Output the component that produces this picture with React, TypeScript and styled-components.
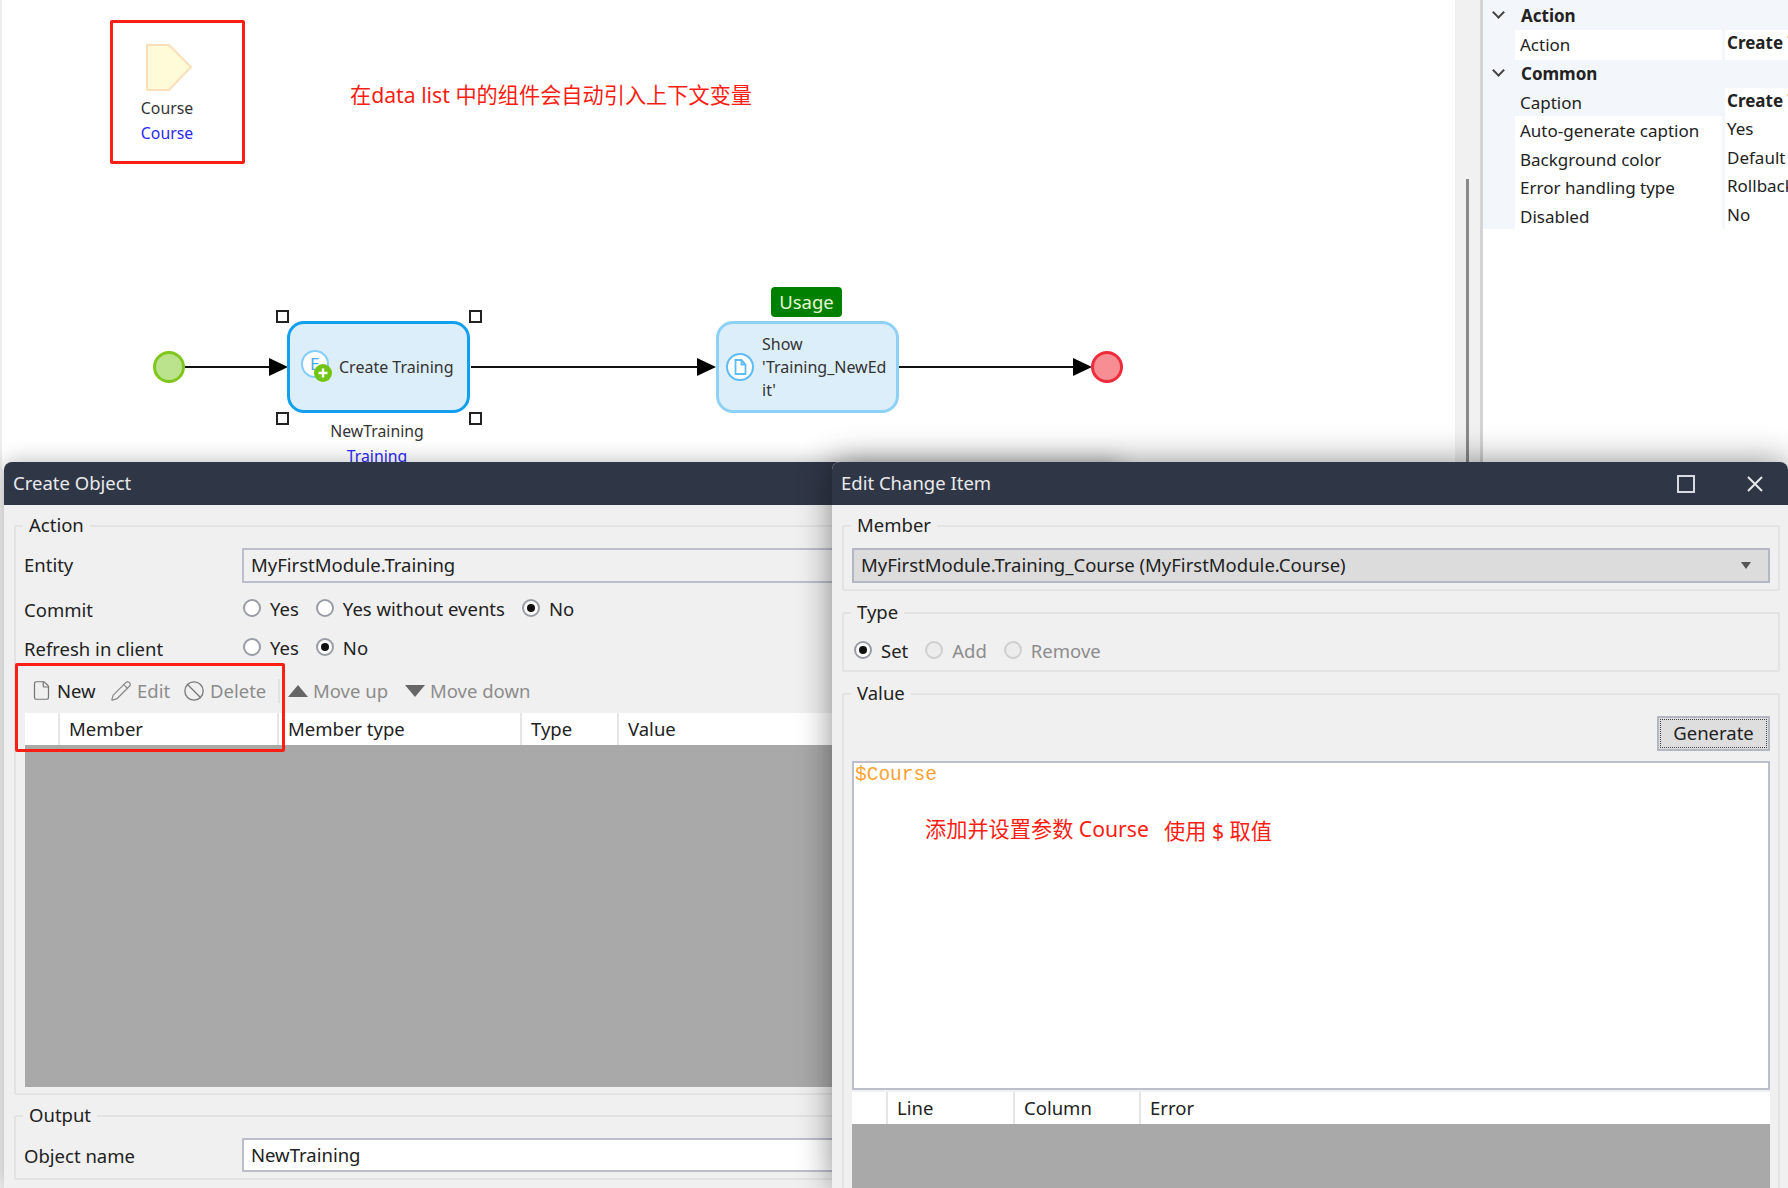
import styled, { createGlobalStyle } from "styled-components";
import { Ban, File, Pencil } from "lucide-react";

const GlobalStyle = createGlobalStyle`
  html, body {
    margin: 0;
    padding: 0;
    background: #fff;
  }
  body {
    font-family: "Noto Sans", "Noto Sans CJK SC", sans-serif;
    color: #222;
  }
`;

function CreateIcon() {
  return (
    <svg width="34" height="34" viewBox="0 0 34 34">
      <circle cx="15" cy="14" r="13" fill="#fff" stroke="#86cdf6" strokeWidth="2" />
      <text x="10" y="20" fontSize="17" fill="#4aa8e8" fontFamily="Noto Sans">E</text>
      <circle cx="23" cy="23" r="9" fill="#72c412" />
      <path d="M23 18.5v9M18.5 23h9" stroke="#fff" strokeWidth="2.4" />
    </svg>
  );
}

function PageIcon() {
  return (
    <svg width="30" height="30" viewBox="0 0 30 30">
      <circle cx="15" cy="15" r="13" fill="#fff" stroke="#5ebcf5" strokeWidth="2" />
      <path d="M10.5 8h6l4 4.5V22h-10z M16.5 8v4.5h4" fill="none" stroke="#5ebcf5" strokeWidth="1.8" />
    </svg>
  );
}

function Radio({ checked, disabled }: { checked?: boolean; disabled?: boolean }) {
  return <RadioMark $checked={checked} $disabled={disabled} />;
}

export default function App() {
  return (
    <Page>
      <GlobalStyle />
      <TopArea>
        <Canvas>
          <Edges width="1300" height="462">
            <path d="M185 367H270M471 367H697M898 367H1073" stroke="#111" strokeWidth="2" />
            <polygon points="269,358 288,367 269,376" fill="#000" />
            <polygon points="697,358 716,367 697,376" fill="#000" />
            <polygon points="1073,358 1092,367 1073,376" fill="#000" />
          </Edges>

          <Parameter>
            <svg width="48" height="49" viewBox="0 0 48 49">
              <polygon points="2,2 24,2 46,24 24,47 2,47" fill="#fffad8" stroke="#fbdfb8" strokeWidth="2" />
            </svg>
            <NodeName>Course</NodeName>
            <NodeType>Course</NodeType>
          </Parameter>

          <Event $x={153} $bg="#bbe28c" $line="#80c61e" />
          <Event $x={1091} $bg="#f78e93" $line="#ee2b3b" />

          <Activity $x={287} $line="#12a0ee" $pad={10} $gap={5}>
            <CreateIcon />
            <ActivityText>Create Training</ActivityText>
          </Activity>
          <Handle $x={276} $y={310} />
          <Handle $x={469} $y={310} />
          <Handle $x={276} $y={412} />
          <Handle $x={469} $y={412} />
          <Caption>
            <NodeName>NewTraining</NodeName>
            <NodeType>Training</NodeType>
          </Caption>

          <UsageTag>Usage</UsageTag>
          <Activity $x={716} $line="#8ed1f6" $pad={6} $gap={7}>
            <PageIcon />
            <ActivityText>
              Show
              <br />
              'Training_NewEd
              <br />
              it'
            </ActivityText>
          </Activity>

          <NoteTop>在data list 中的组件会自动引入上下文变量</NoteTop>
          <RedBox $x={110} $y={20} $w={135} $h={144} />
        </Canvas>

        <Gutter>
          <ScrollThumb />
        </Gutter>

        <Properties>
          <GroupRow>
            <Chevron />
            <b>Action</b>
          </GroupRow>
          <PropRow>
            <PropLabel>Action</PropLabel>
            <PropValue $bold>Create Training</PropValue>
          </PropRow>
          <GroupRow>
            <Chevron />
            <b>Common</b>
          </GroupRow>
          <PropRow>
            <PropLabel $tinted>Caption</PropLabel>
            <PropValue $bold>Create Training</PropValue>
          </PropRow>
          <PropRow>
            <PropLabel>Auto-generate caption</PropLabel>
            <PropValue>Yes</PropValue>
          </PropRow>
          <PropRow>
            <PropLabel>Background color</PropLabel>
            <PropValue>Default</PropValue>
          </PropRow>
          <PropRow>
            <PropLabel>Error handling type</PropLabel>
            <PropValue>Rollback</PropValue>
          </PropRow>
          <PropRow>
            <PropLabel>Disabled</PropLabel>
            <PropValue>No</PropValue>
          </PropRow>
        </Properties>
      </TopArea>

      <ObjectWindow>
        <TitleBar>
          <span>Create Object</span>
        </TitleBar>
        <WindowBody>
          <Group>
            <Legend>Action</Legend>
            <FormRow $h={35}>
              <FormLabel $lift>Entity</FormLabel>
              <TextBox>MyFirstModule.Training</TextBox>
            </FormRow>
            <FormRow $h={38} $top={7}>
              <FormLabel>Commit</FormLabel>
              <RadioRow>
                <RadioOption><Radio /><span>Yes</span></RadioOption>
                <RadioOption><Radio /><span>Yes without events</span></RadioOption>
                <RadioOption><Radio checked /><span>No</span></RadioOption>
              </RadioRow>
            </FormRow>
            <FormRow $h={38} $top={1}>
              <FormLabel>Refresh in client</FormLabel>
              <RadioRow>
                <RadioOption><Radio /><span>Yes</span></RadioOption>
                <RadioOption><Radio checked /><span>No</span></RadioOption>
              </RadioRow>
            </FormRow>
            <Toolbar>
              <ToolButton $w={79}>
                <File size={21} strokeWidth={1.4} color="#777" />
                <span>New</span>
              </ToolButton>
              <ToolButton $w={73} $off>
                <Pencil size={22} strokeWidth={1.3} color="#888" />
                <span>Edit</span>
              </ToolButton>
              <ToolButton $w={95} $off>
                <Ban size={22} strokeWidth={1.4} color="#777" />
                <span>Delete</span>
              </ToolButton>
              <ToolSeparator />
              <ToolButton $w={117} $off>
                <TriangleUp />
                <span>Move up</span>
              </ToolButton>
              <ToolButton $off>
                <TriangleDown />
                <span>Move down</span>
              </ToolButton>
            </Toolbar>
            <GridHead $columns="35px 219px 243px 97px 1fr" $left={1}>
              <GridCell />
              <GridCell>Member</GridCell>
              <GridCell>Member type</GridCell>
              <GridCell>Type</GridCell>
              <GridCell>Value</GridCell>
            </GridHead>
            <GridEmpty $h={342} $left={1} />
          </Group>
          <Group $gap={9}>
            <Legend>Output</Legend>
            <FormRow $h={34}>
              <FormLabel>Object name</FormLabel>
              <TextBox $white>NewTraining</TextBox>
            </FormRow>
          </Group>
        </WindowBody>
      </ObjectWindow>

      <ChangeWindow>
        <TitleBar>
          <span>Edit Change Item</span>
          <WindowButtons>
            <svg width="18" height="18" viewBox="0 0 18 18">
              <rect x="1" y="1" width="16" height="16" fill="none" stroke="#d8dbe0" strokeWidth="2" />
            </svg>
            <svg width="18" height="18" viewBox="0 0 18 18">
              <path d="M2 2L16 16M16 2L2 16" stroke="#e6e8ec" strokeWidth="2" />
            </svg>
          </WindowButtons>
        </TitleBar>
        <WindowBody>
          <Group>
            <Legend>Member</Legend>
            <SelectBox>
              <span>MyFirstModule.Training_Course (MyFirstModule.Course)</span>
              <SelectCaret />
            </SelectBox>
          </Group>
          <Group $gap={10}>
            <Legend>Type</Legend>
            <RadioRow $inset>
              <RadioOption><Radio checked /><span>Set</span></RadioOption>
              <RadioOption $off><Radio disabled /><span>Add</span></RadioOption>
              <RadioOption $off><Radio disabled /><span>Remove</span></RadioOption>
            </RadioRow>
          </Group>
          <Group $gap={10} $open>
            <Legend>Value</Legend>
            <ButtonRow>
              <GenerateButton>Generate</GenerateButton>
            </ButtonRow>
            <CodeBox>$Course</CodeBox>
            <GridHead $columns="36px 127px 126px 1fr" $top={2}>
              <GridCell />
              <GridCell>Line</GridCell>
              <GridCell>Column</GridCell>
              <GridCell>Error</GridCell>
            </GridHead>
            <GridEmpty $h={80} />
          </Group>
        </WindowBody>
      </ChangeWindow>

      <RedBox $x={15} $y={663} $w={270} $h={89} />
      <NoteLeft>添加并设置参数 Course</NoteLeft>
      <NoteRight>使用 $ 取值</NoteRight>
    </Page>
  );
}

const Page = styled.div`
  position: relative;
  width: 1788px;
  height: 1188px;
  overflow: hidden;
  background: #f2f2f2;
  font-size: 18.5px;
`;

const TopArea = styled.div`
  display: flex;
  height: 470px;
  background: #fff;
`;

const Canvas = styled.div`
  position: relative;
  width: 1455px;
  flex: none;
  box-shadow: inset 2px 0 0 #eee;
`;

const Edges = styled.svg`
  position: absolute;
  left: 0;
  top: 0;
`;

const Parameter = styled.div`
  position: absolute;
  left: 137px;
  top: 43px;
  width: 60px;
  display: flex;
  flex-direction: column;
  align-items: center;
  svg {
    margin-left: 4px;
    margin-bottom: 4px;
  }
`;

const NodeName = styled.div`
  font-size: 15.8px;
  line-height: 25px;
  color: #333;
`;

const NodeType = styled.div`
  font-size: 15.8px;
  line-height: 25px;
  color: #2a2af0;
`;

const Event = styled.div<{ $x: number; $bg: string; $line: string }>`
  position: absolute;
  left: ${(p) => p.$x}px;
  top: 351px;
  width: 32px;
  height: 32px;
  box-sizing: border-box;
  border-radius: 50%;
  background: ${(p) => p.$bg};
  border: 3px solid ${(p) => p.$line};
`;

const Activity = styled.div<{ $x: number; $line: string; $pad: number; $gap: number }>`
  position: absolute;
  left: ${(p) => p.$x}px;
  top: 321px;
  width: 183px;
  height: 92px;
  box-sizing: border-box;
  padding-left: ${(p) => p.$pad}px;
  display: flex;
  align-items: center;
  gap: ${(p) => p.$gap}px;
  background: #dbeefa;
  border: 3px solid ${(p) => p.$line};
  border-radius: 17px;
  svg {
    flex: none;
  }
`;

const ActivityText = styled.div`
  font-size: 16px;
  line-height: 23px;
  color: #333;
  white-space: nowrap;
`;

const Handle = styled.div<{ $x: number; $y: number }>`
  position: absolute;
  left: ${(p) => p.$x}px;
  top: ${(p) => p.$y}px;
  width: 13px;
  height: 13px;
  box-sizing: border-box;
  background: #fff;
  border: 2px solid #222;
`;

const Caption = styled.div`
  position: absolute;
  left: 287px;
  top: 419px;
  width: 180px;
  text-align: center;
`;

const UsageTag = styled.div`
  position: absolute;
  left: 771px;
  top: 287px;
  width: 71px;
  height: 30px;
  background: #008000;
  border-radius: 4px;
  color: #e6f6d4;
  font-size: 18.5px;
  line-height: 29px;
  text-align: center;
`;

const NoteTop = styled.div`
  position: absolute;
  left: 350px;
  top: 80px;
  color: #fa1e14;
  font-size: 21.2px;
  line-height: 30px;
  white-space: nowrap;
`;

const RedBox = styled.div<{ $x: number; $y: number; $w: number; $h: number }>`
  position: absolute;
  left: ${(p) => p.$x}px;
  top: ${(p) => p.$y}px;
  width: ${(p) => p.$w}px;
  height: ${(p) => p.$h}px;
  box-sizing: border-box;
  border: 3px solid #fc2014;
  border-radius: 2px;
  z-index: 5;
`;

const Gutter = styled.div`
  position: relative;
  width: 28px;
  flex: none;
  box-sizing: border-box;
  background: #f1f1f1;
  border-right: 3px solid #d4d4d4;
`;

const ScrollThumb = styled.div`
  position: absolute;
  left: 11px;
  top: 179px;
  bottom: 0;
  width: 3px;
  background: #8a8a8a;
`;

const Properties = styled.div`
  flex: 1;
  align-self: flex-start;
  height: 229px;
  padding-top: 1px;
  box-sizing: border-box;
  overflow: hidden;
  background: #f3f6fb;
  font-size: 17px;
  color: #222;
`;

const GroupRow = styled.div`
  display: flex;
  align-items: center;
  height: 29px;
  padding-left: 11px;
  gap: 18px;
`;

const Chevron = styled.span`
  display: block;
  width: 9px;
  height: 9px;
  margin-top: -6px;
  box-sizing: border-box;
  border-right: 2px solid #444;
  border-bottom: 2px solid #444;
  transform: rotate(45deg);
`;

const PropRow = styled.div`
  display: grid;
  grid-template-columns: 207px 1fr;
  column-gap: 3px;
  height: 28.6px;
  margin-left: 32px;
  padding-bottom: 1px;
  box-sizing: border-box;
  white-space: nowrap;
`;

const PropLabel = styled.div<{ $tinted?: boolean }>`
  padding-left: 5px;
  line-height: 30px;
  background: ${(p) => (p.$tinted ? "transparent" : "#fff")};
`;

const PropValue = styled.div<{ $bold?: boolean }>`
  padding-left: 2px;
  line-height: 26px;
  background: #fff;
  font-weight: ${(p) => (p.$bold ? 700 : 400)};
`;

const ObjectWindow = styled.section`
  position: absolute;
  left: 4px;
  top: 462px;
  width: 1118px;
  height: 726px;
  background: #f0f0f0;
  border-radius: 8px 8px 0 0;
  box-shadow: 0 0 22px rgba(0, 0, 0, 0.28);
  overflow: hidden;
`;

const ChangeWindow = styled.section`
  position: absolute;
  left: 832px;
  top: 462px;
  width: 956px;
  height: 726px;
  background: #f0f0f0;
  border-radius: 8px 8px 0 0;
  box-shadow: 0 0 34px rgba(0, 0, 0, 0.45);
  overflow: hidden;
`;

const TitleBar = styled.header`
  display: flex;
  align-items: center;
  justify-content: space-between;
  height: 43px;
  box-sizing: border-box;
  padding: 0 24px 2px 9px;
  background: #2f3646;
  color: #e9eaec;
  font-size: 18.5px;
`;

const WindowButtons = styled.div`
  display: flex;
  gap: 51px;
  margin-top: 2px;
  svg {
    display: block;
  }
`;

const WindowBody = styled.div`
  display: flex;
  flex-direction: column;
  padding: 9px 8px 0 10px;
`;

const Group = styled.fieldset<{ $gap?: number; $open?: boolean }>`
  margin: ${(p) => p.$gap ?? 0}px 0 0;
  padding: 10px 8px 6px;
  min-width: 0;
  border: 2px solid #e3e3e3;
  border-radius: 2px;
  ${(p) => p.$open && "border-bottom: none;"}
`;

const Legend = styled.legend`
  margin-left: -1px;
  padding: 0 6px 2px;
  font-size: 18.5px;
  line-height: 22px;
  color: #222;
`;

const FormRow = styled.div<{ $h: number; $top?: number }>`
  display: grid;
  grid-template-columns: 218px 1fr;
  align-items: center;
  height: ${(p) => p.$h}px;
  margin-top: ${(p) => p.$top ?? 0}px;
`;

const FormLabel = styled.div<{ $lift?: boolean }>`
  white-space: nowrap;
  padding-bottom: ${(p) => (p.$lift ? "3px" : "0")};
`;

const TextBox = styled.div<{ $white?: boolean }>`
  height: 100%;
  box-sizing: border-box;
  padding: 0 0 2px 7px;
  display: flex;
  align-items: center;
  border: 2px solid #bcbfca;
  background: ${(p) => (p.$white ? "#fff" : "#f0f0f0")};
`;

const RadioRow = styled.div<{ $inset?: boolean }>`
  display: flex;
  align-items: center;
  gap: 17px;
  height: 24px;
  padding-left: ${(p) => (p.$inset ? "2px" : "1px")};
  margin-top: ${(p) => (p.$inset ? "3px" : "-2px")};
  margin-bottom: ${(p) => (p.$inset ? "2px" : "0")};
`;

const RadioOption = styled.label<{ $off?: boolean }>`
  display: flex;
  align-items: center;
  gap: 9px;
  white-space: nowrap;
  color: ${(p) => (p.$off ? "#8c8c8c" : "#222")};
`;

const RadioMark = styled.span<{ $checked?: boolean; $disabled?: boolean }>`
  flex: none;
  position: relative;
  display: block;
  width: 18px;
  height: 18px;
  box-sizing: border-box;
  border-radius: 50%;
  border: 2px solid ${(p) => (p.$disabled ? "#cfcfcf" : "#9a9ca4")};
  background: ${(p) => (p.$disabled ? "#ececec" : "#fff")};
  &::after {
    content: "";
    display: ${(p) => (p.$checked ? "block" : "none")};
    position: absolute;
    left: 3px;
    top: 3px;
    width: 8px;
    height: 8px;
    border-radius: 50%;
    background: #111;
  }
`;

const Toolbar = styled.div`
  display: flex;
  align-items: center;
  height: 39px;
  box-sizing: border-box;
  margin: 5px 0 2px;
  padding: 0 0 2px 7px;
`;

const ToolButton = styled.div<{ $w?: number; $off?: boolean }>`
  display: flex;
  align-items: center;
  gap: 5px;
  flex: none;
  width: ${(p) => (p.$w ? `${p.$w}px` : "auto")};
  color: ${(p) => (p.$off ? "#8c8c8c" : "#222")};
  white-space: nowrap;
`;

const ToolSeparator = styled.div`
  flex: none;
  width: 2px;
  height: 24px;
  margin: 0 8px 0 0;
  background: #e2e2e2;
`;

const TriangleUp = styled.span`
  width: 0;
  height: 0;
  border-left: 10px solid transparent;
  border-right: 10px solid transparent;
  border-bottom: 12px solid #666;
`;

const TriangleDown = styled.span`
  width: 0;
  height: 0;
  border-left: 10px solid transparent;
  border-right: 10px solid transparent;
  border-top: 12px solid #666;
`;

const GridHead = styled.div<{ $columns: string; $top?: number; $left?: number }>`
  display: grid;
  grid-template-columns: ${(p) => p.$columns};
  height: 32px;
  margin-top: ${(p) => p.$top ?? 0}px;
  margin-left: ${(p) => p.$left ?? 0}px;
  background: #fff;
`;

const GridCell = styled.div`
  box-sizing: border-box;
  padding-left: 9px;
  border-right: 2px solid #e6e6e6;
  line-height: 32px;
  white-space: nowrap;
  &:last-child {
    border-right: none;
  }
`;

const GridEmpty = styled.div<{ $h: number; $left?: number }>`
  height: ${(p) => p.$h}px;
  margin-left: ${(p) => p.$left ?? 0}px;
  background: #a9a9a9;
`;

const SelectBox = styled.div`
  display: flex;
  align-items: center;
  justify-content: space-between;
  height: 35px;
  box-sizing: border-box;
  padding: 0 17px 3px 7px;
  border: 2px solid #b4b7c2;
  background: #dcdcdc;
`;

const SelectCaret = styled.span`
  width: 0;
  height: 0;
  margin-top: 3px;
  border-left: 5px solid transparent;
  border-right: 5px solid transparent;
  border-top: 7px solid #555;
`;

const ButtonRow = styled.div`
  display: flex;
  justify-content: flex-end;
  height: 35px;
`;

const GenerateButton = styled.div`
  width: 113px;
  height: 35px;
  box-sizing: border-box;
  border: 2px solid #b4b7c0;
  background: #dedede;
  outline: 1px dotted #444;
  outline-offset: -4px;
  text-align: center;
  line-height: 30px;
`;

const CodeBox = styled.div`
  height: 329px;
  margin-top: 10px;
  box-sizing: border-box;
  padding: 0 1px;
  border: 2px solid #bcbfca;
  background: #fff;
  font-family: "Liberation Mono", monospace;
  font-size: 19.5px;
  line-height: 24px;
  color: #f9a232;
`;

const NoteLeft = styled.div`
  position: absolute;
  left: 925px;
  top: 814px;
  color: #fa1e14;
  font-size: 21.2px;
  line-height: 30px;
  white-space: nowrap;
`;

const NoteRight = styled.div`
  position: absolute;
  left: 1164px;
  top: 816px;
  color: #fa1e14;
  font-size: 21.2px;
  line-height: 30px;
  white-space: nowrap;
`;
